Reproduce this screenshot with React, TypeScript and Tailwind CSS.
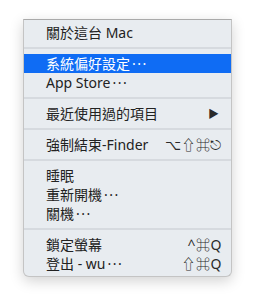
import { Fragment } from "react"

type Item = {
  label: string
  shortcut?: string
  submenu?: boolean
  active?: boolean
  more?: boolean
}

// groups of menu rows, a separator between each group
const groups: Item[][] = [
  [{ label: "關於這台 Mac" }],
  [{ label: "系統偏好設定", more: true, active: true }, { label: "App Store", more: true }],
  [{ label: "最近使用過的項目", submenu: true }],
  [{ label: "強制結束-Finder", shortcut: "⌥⇧⌘⎋" }],
  [{ label: "睡眠" }, { label: "重新開機", more: true }, { label: "關機", more: true }],
  [
    { label: "鎖定螢幕", shortcut: "^⌘Q" },
    { label: "登出 - wu", more: true, shortcut: "⇧⌘Q" },
  ],
]

function Row({ item }: { item: Item }) {
  return (
    <div
      className={`flex h-[19px] items-center pl-[22px] pr-[9px] text-[14px] leading-none ${
        item.active ? "bg-[#0f6cf4] text-white" : "text-[#222222]"
      }`}
    >
      <span className="flex-1 whitespace-nowrap">
        {item.label}
        {item.more && <span className="ml-[2px] tracking-[1.5px]">···</span>}
      </span>
      {item.shortcut && (
        <span className="whitespace-nowrap tracking-[0.5px] text-[#2a2a2a]">
          {item.shortcut}
        </span>
      )}
      {item.submenu && <span className="mr-[3px] text-[11px] text-[#2a2a2a]">▶</span>}
    </div>
  )
}

export default function App() {
  return (
    <div
      className="h-[304px] w-[255px] bg-white pl-[23px] pt-[19px]"
      style={{ fontFamily: '"Noto Sans", "Noto Sans CJK TC", sans-serif' }}
    >
      <div className="w-[209px] rounded-b-[6px] border border-t-[#a9a9a9] border-x-[#c4c4c4] border-b-[#c4c4c4] bg-[#e8ecf0] py-[3px] shadow-[0_4px_14px_rgba(0,0,0,0.18)]">
        {groups.map((group, i) => (
          <Fragment key={i}>
            {i > 0 && (
              <div className="flex h-[12px] items-center">
                <div className="h-[2px] w-full bg-[#d6dadf]" />
              </div>
            )}
            {group.map(item => (
              <Row key={item.label} item={item} />
            ))}
          </Fragment>
        ))}
      </div>
    </div>
  )
}
